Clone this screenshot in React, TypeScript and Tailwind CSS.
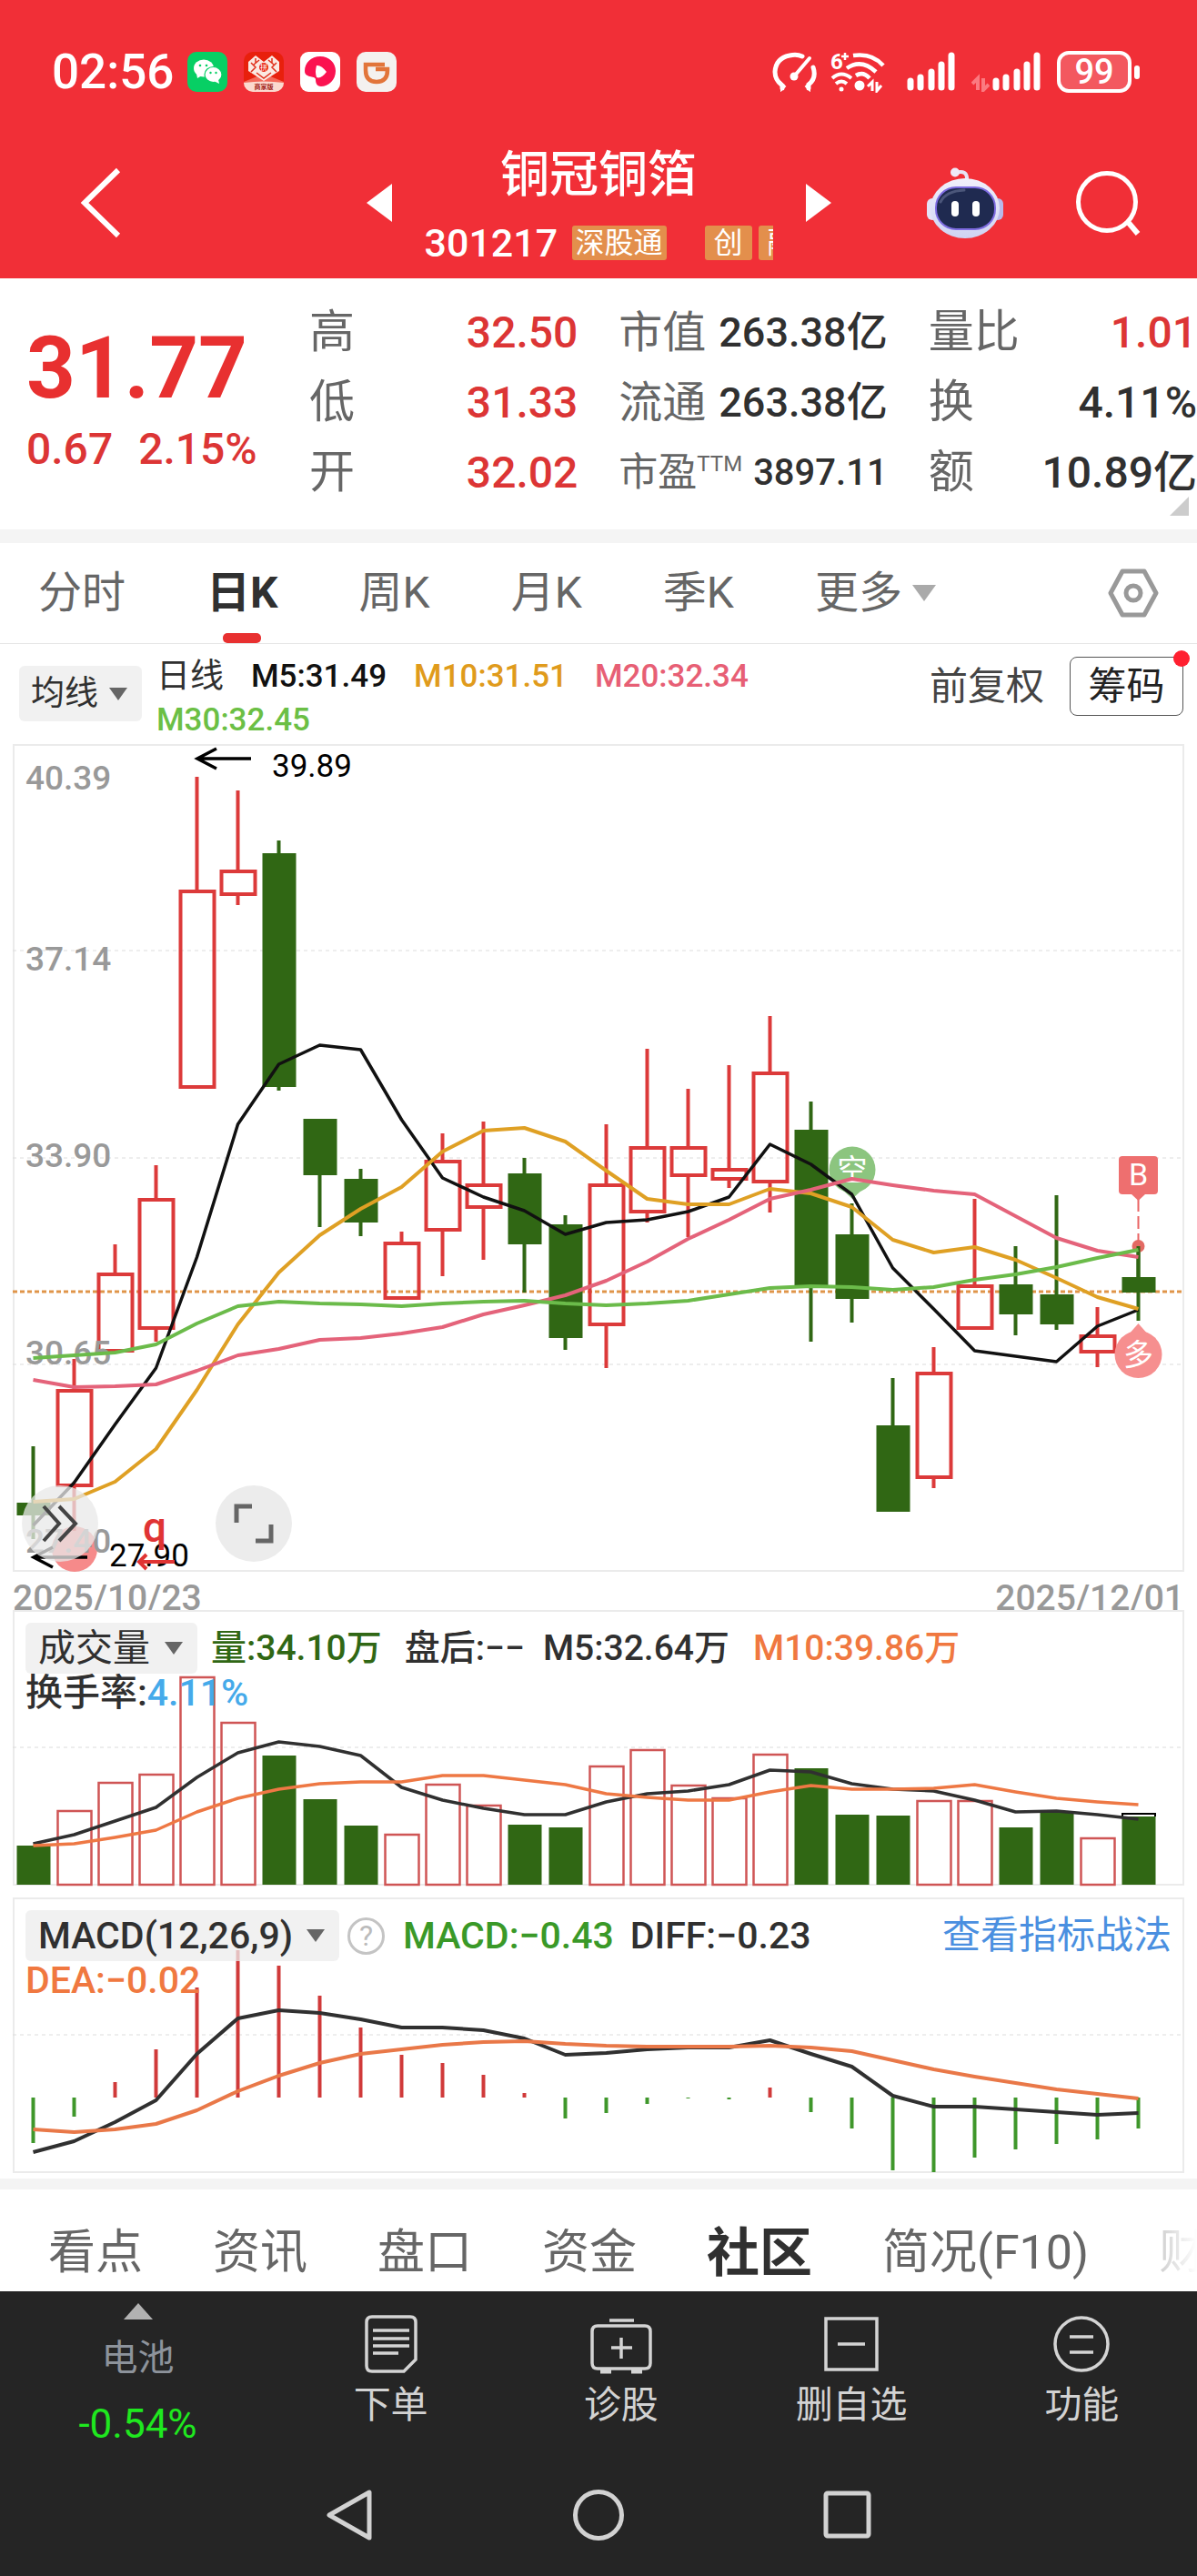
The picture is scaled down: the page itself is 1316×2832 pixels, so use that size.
import React from "react";

const FONT = "font-[Roboto,'Noto_Sans_CJK_SC',sans-serif]";

/* ---------- chart data (units of the drawing's own view box) ---------- */

const X0 = 36.5;
const STEP = 45;
const cx = (i: number) => X0 + i * STEP;

type Candle = [up: boolean, high: number, top: number, bottom: number, low: number];

const candles: Candle[] = [
  [false, 1590, 1652, 1666, 1692],
  [true, 1494, 1527, 1635, 1683],
  [true, 1368, 1399, 1487, 1487],
  [true, 1281, 1317, 1462, 1475],
  [true, 854, 978, 1197, 1197],
  [true, 869, 956, 985, 995],
  [false, 924, 938, 1195, 1199],
  [false, 1230, 1230, 1292, 1349],
  [false, 1285, 1296, 1344, 1359],
  [true, 1354, 1365, 1429, 1429],
  [true, 1246, 1275, 1354, 1403],
  [true, 1233, 1301, 1329, 1385],
  [false, 1273, 1290, 1368, 1421],
  [false, 1336, 1346, 1471, 1484],
  [true, 1236, 1301, 1458, 1504],
  [true, 1153, 1260, 1334, 1344],
  [true, 1197, 1260, 1294, 1360],
  [true, 1171, 1284, 1298, 1306],
  [true, 1117, 1178, 1301, 1333],
  [false, 1211, 1242, 1415, 1475],
  [false, 1323, 1357, 1428, 1454],
  [false, 1515, 1567, 1662, 1662],
  [true, 1481, 1508, 1626, 1636],
  [true, 1318, 1412, 1462, 1462],
  [false, 1370, 1412, 1445, 1468],
  [false, 1314, 1423, 1456, 1462],
  [true, 1437, 1467, 1488, 1503],
  [false, 1370, 1404, 1421, 1452],
];

const ma5 = [1677, 1630, 1566, 1504, 1382, 1236, 1170, 1149, 1154, 1231, 1295, 1316, 1331, 1357, 1344, 1341, 1332, 1316, 1258, 1280, 1313, 1394, 1439, 1485, 1491, 1497, 1458, 1440];
const ma10 = [1651, 1648, 1629, 1593, 1528, 1456, 1399, 1358, 1329, 1305, 1266, 1243, 1240, 1255, 1287, 1318, 1324, 1324, 1307, 1312, 1327, 1363, 1377, 1371, 1385, 1405, 1426, 1439];
const ma20 = [1517, 1525, 1524, 1522, 1507, 1490, 1483, 1473, 1471, 1466, 1459, 1445, 1435, 1424, 1408, 1387, 1362, 1341, 1318, 1308, 1296, 1303, 1309, 1313, 1337, 1361, 1375, 1382];
const ma30 = [1493, 1490, 1487, 1478, 1455, 1436, 1431, 1433, 1434, 1436, 1433, 1431, 1430, 1433, 1435, 1433, 1430, 1423, 1416, 1414, 1415, 1418, 1415, 1407, 1401, 1393, 1383, 1374];

const volume = [2029, 1991, 1960, 1951, 1844, 1894, 1930, 1978, 2007, 2017, 1962, 1985, 2006, 2009, 1942, 1924, 1963, 1977, 1929, 1944, 1995, 1996, 1980, 1980, 2009, 1992, 2021, 1997];
const vol5 = [2027, 2017, 2002, 1987, 1954, 1927, 1915, 1920, 1930, 1965, 1979, 1988, 1995, 1995, 1981, 1972, 1969, 1962, 1946, 1948, 1961, 1967, 1969, 1979, 1992, 1991, 1995, 2000];
const vol10 = [2029, 2027, 2020, 2012, 1992, 1977, 1967, 1961, 1959, 1959, 1952, 1952, 1957, 1962, 1972, 1976, 1979, 1979, 1970, 1963, 1967, 1967, 1966, 1962, 1970, 1977, 1981, 1984];

const macd = [2356, 2327, 2289, 2253, 2185, 2144, 2161, 2194, 2229, 2259, 2268, 2281, 2301, 2329, 2323, 2313, 2307, 2308, 2295, 2322, 2340, 2386, 2388, 2372, 2363, 2357, 2352, 2340];
const diff = [2366, 2354, 2333, 2309, 2258, 2219, 2210, 2213, 2220, 2229, 2229, 2232, 2241, 2259, 2257, 2253, 2251, 2251, 2243, 2258, 2272, 2304, 2316, 2316, 2319, 2322, 2325, 2323];
const dea = [2341, 2344, 2341, 2335, 2320, 2299, 2282, 2268, 2258, 2253, 2248, 2245, 2244, 2247, 2249, 2250, 2250, 2250, 2249, 2251, 2255, 2265, 2275, 2283, 2290, 2297, 2302, 2307];

const points = (ys: number[]) => ys.map((y, i) => `${cx(i)},${y}`).join(" ");

function Line({ ys, color, w = 4 }: { ys: number[]; color: string; w?: number }) {
  return <polyline points={points(ys)} fill="none" stroke={color} strokeWidth={w} strokeLinejoin="round" />;
}

function Grid({ y }: { y: number }) {
  return <line x1="14" x2="1300" y1={y} y2={y} stroke="#dcdcdc" strokeWidth="1" strokeDasharray="4 4" />;
}

function Caret({ className }: { className?: string }) {
  return (
    <svg viewBox="0 0 20 14" className={className} aria-hidden="true">
      <path d="M0 0H20L10 14Z" fill="currentColor" />
    </svg>
  );
}

/* ---------- header ---------- */

function Signal() {
  return (
    <svg viewBox="0 0 54 44" className="h-[44px] w-[54px]" stroke="#fff" strokeWidth="7" strokeLinecap="round">
      <path d="M4 32V39M15 28V39M27 22V39M38 14V39M49 4V39" />
    </svg>
  );
}

function StatusBar() {
  return (
    <div className="flex h-[46px] items-center justify-between pl-[57px] pr-[63px]">
      <div className="flex items-center">
        <span className="w-[149px] text-[53px] font-medium leading-[46px]">02:56</span>
        <div className="flex gap-[18px]">
          <svg viewBox="0 0 44 44" className="size-[44px]">
            <rect width="44" height="44" rx="10" fill="#07cf64" />
            <ellipse cx="18" cy="18" rx="11" ry="9.500" fill="#fff" />
            <path d="M10 24L11 29L16 26Z" fill="#fff" />
            <ellipse cx="28.500" cy="25" rx="9.500" ry="8.500" fill="#fff" stroke="#07cf64" strokeWidth="1.200" />
            <path d="M34 30L35 35L29 32Z" fill="#fff" />
            <circle cx="14" cy="15" r="1.300" fill="#07cf64" />
            <circle cx="21" cy="15" r="1.300" fill="#07cf64" />
            <circle cx="25.500" cy="23" r="1.200" fill="#07cf64" />
            <circle cx="31.500" cy="23" r="1.200" fill="#07cf64" />
          </svg>
          <svg viewBox="0 0 44 44" className="size-[44px]">
            <defs>
              <clipPath id="shopclip"><rect width="44" height="44" rx="10" /></clipPath>
            </defs>
            <g clipPath="url(#shopclip)">
              <rect width="44" height="44" fill="#e8200c" />
              <path d="M22 24L0 33V44H44V33Z" fill="#f4695a" />
              <path d="M22 32L5 21V11L13 4L22 11L31 4L39 11V21Z" fill="#fbe9e2" />
              <path d="M8 12L13 17L8 22M17 9L11 14M36 12L31 17L36 22M27 9L33 14M14 23L22 29L30 23M13 7V12M31 7V12" stroke="#e0301c" strokeWidth="1.500" fill="none" />
              <circle cx="22" cy="17" r="5" fill="#e8200c" />
              <text x="22" y="20" fontSize="8" fill="#fff" textAnchor="middle">拼</text>
              <path d="M0 34Q22 31 44 34V44H0Z" fill="#fbd9cf" />
              <text x="22" y="41" fontSize="7" fontWeight="700" fill="#a02015" textAnchor="middle">商家版</text>
            </g>
          </svg>
          <svg viewBox="0 0 44 44" className="size-[44px]">
            <rect width="44" height="44" rx="9" fill="#fff" />
            <path d="M22 5C32 5 39 12 39 21C39 31 31 38 23 38C18 38 17 34 17 30C16 26 5 29 5 21C5 12 12 5 22 5Z" fill="#fb1250" />
            <path d="M18 15Q23 14 29 22Q23 30 18 28Q16 22 18 15Z" fill="#fff" />
          </svg>
          <svg viewBox="0 0 44 44" className="size-[44px]">
            <rect width="44" height="44" rx="10" fill="#f4f1ef" />
            <path d="M31 14H10V20Q10 33 22 33Q34 33 34 20V19H21" fill="none" stroke="#e2753a" strokeWidth="4.500" />
          </svg>
        </div>
      </div>
      <div className="flex items-center">
        <svg viewBox="0 0 50 44" className="mr-[14px] h-[44px] w-[50px]" fill="none" stroke="#fff" strokeWidth="5" strokeLinecap="round">
          <path d="M11 40L11 37Q3 31 3 22Q4 7 19 4Q27 2 33 5M45 17Q49 29 40 36L40 40" />
          <path d="M10 34V42L14 38ZM41 34V42L37 38Z" strokeWidth="2" fill="#fff" />
          <path d="M41 7L24 27" strokeWidth="4" />
          <circle cx="24" cy="27" r="4.500" fill="#fff" stroke="none" />
        </svg>
        <svg viewBox="0 0 60 46" className="mr-[24px] h-[46px] w-[60px]" fill="none" stroke="#fff" strokeWidth="4.500">
          <text x="0" y="20" fontSize="24" fontWeight="700" fill="#fff" stroke="none">6</text>
          <path d="M12 6H20M16 2V10" strokeWidth="2.500" />
          <path d="M25 5Q46 2 58 16M18 19Q34 8 50 23M28 27Q36 22 43 30" />
          <path d="M2 30Q12 21 23 30M6 36Q12 31 18 36" strokeWidth="4" />
          <circle cx="12" cy="42" r="2.500" fill="#fff" stroke="none" />
          <circle cx="32" cy="38" r="5.500" fill="#fff" stroke="none" />
          <path d="M41 39L46 34V44M51 34V44L56 38" strokeWidth="3" />
        </svg>
        <Signal />
        <svg viewBox="0 0 20 44" className="ml-[17px] mr-[3px] h-[44px] w-[20px]" fill="none" stroke="#fb7a80" strokeWidth="4">
          <path d="M1 35L7 29V42M13 29V42L19 36" />
        </svg>
        <Signal />
        <div className="ml-[17px] flex h-[46px] w-[82px] items-center justify-center rounded-[13px] border-4 border-white bg-white/20 text-[38px] font-medium leading-none">
          99
        </div>
        <div className="ml-[3px] h-[15px] w-[6px] rounded-full bg-white" />
      </div>
    </div>
  );
}

function Robot() {
  return (
    <svg viewBox="0 0 86 78" className="h-[78px] w-[86px]">
      <defs>
        <linearGradient id="shell" x1="0" y1="0" x2="0" y2="1">
          <stop offset="0" stopColor="#f1effb" />
          <stop offset="1" stopColor="#cfd3f2" />
        </linearGradient>
      </defs>
      <path d="M32 6Q46 2 45 14" fill="none" stroke="#e7e2f5" strokeWidth="4" />
      <circle cx="32" cy="5.500" r="5" fill="#efe9f8" />
      <rect x="1" y="34" width="12" height="24" rx="6" fill="#e4e2f6" />
      <rect x="73" y="34" width="12" height="24" rx="6" fill="#b9b9ea" />
      <ellipse cx="43" cy="45" rx="38" ry="33" fill="url(#shell)" />
      <rect x="11" y="22" width="65" height="46" rx="22" fill="#1f2a50" stroke="#7d6be0" strokeWidth="2" />
      <path d="M16 38Q22 26 42 25" fill="none" stroke="#4b567a" strokeWidth="3" strokeLinecap="round" />
      <rect x="28" y="37" width="8" height="17" rx="4" fill="#fff" />
      <rect x="51" y="37" width="8" height="17" rx="4" fill="#fff" />
    </svg>
  );
}

function Header() {
  return (
    <header className="bg-[#f12f37] pt-[56px] text-white">
      <StatusBar />
      <nav className="grid grid-cols-[1fr_auto_1fr] items-center pb-[14px] pt-[52px]">
        <button aria-label="返回" className="w-fit pl-[88px]">
          <svg viewBox="0 0 46 78" className="h-[78px] w-[46px]" fill="none" stroke="#fff" strokeWidth="6">
            <path d="M42 3L5 39L42 75" />
          </svg>
        </button>
        <div className="flex items-center gap-[36px]">
          <button aria-label="上一只">
            <svg viewBox="0 0 28 42" className="h-[42px] w-[28px]"><path d="M28 0V42L0 21Z" fill="#fff" /></svg>
          </button>
          <div className="w-[383px] pt-[5px]">
            <h1 className="text-center text-[54px] font-medium leading-[68px]">铜冠铜箔</h1>
            <div className="mt-[15px] flex h-[50px] items-center overflow-hidden">
              <span className="w-[162px] shrink-0 text-[43px] font-medium leading-[50px]">301217</span>
              <span className="h-[38px] shrink-0 rounded-[3px] bg-[#e38f4c] px-[4px] text-[32px] leading-[38px]">深股通</span>
              <span className="ml-[42px] h-[38px] shrink-0 rounded-[3px] bg-[#e38f4c] px-[10px] text-[32px] leading-[38px]">创</span>
              <span className="ml-[7px] h-[38px] shrink-0 rounded-[3px] bg-[#e38f4c] px-[10px] text-[32px] leading-[38px]">融</span>
            </div>
          </div>
          <button aria-label="下一只">
            <svg viewBox="0 0 28 42" className="h-[42px] w-[28px]"><path d="M0 0V42L28 21Z" fill="#fff" /></svg>
          </button>
        </div>
        <div className="flex items-center justify-end gap-[78px] pr-[62px]">
          <button aria-label="智能助手"><Robot /></button>
          <button aria-label="搜索">
            <svg viewBox="0 0 72 72" className="size-[72px]" fill="none" stroke="#fff" strokeWidth="5">
              <circle cx="35" cy="35" r="31.500" />
              <path d="M58 57L69 70" strokeWidth="6" />
            </svg>
          </button>
        </div>
      </nav>
    </header>
  );
}

/* ---------- quote ---------- */

type Stat = { id: string; label: React.ReactNode; labelSize: string; value: string; valueClass: string };

const stats: Stat[][] = [
  [
    { id: "high", label: "高", labelSize: "text-[50px]", value: "32.50", valueClass: "text-[48px] text-[#dc3535]" },
    { id: "low", label: "低", labelSize: "text-[50px]", value: "31.33", valueClass: "text-[48px] text-[#dc3535]" },
    { id: "open", label: "开", labelSize: "text-[50px]", value: "32.02", valueClass: "text-[48px] text-[#dc3535]" },
  ],
  [
    { id: "cap", label: "市值", labelSize: "text-[48px]", value: "263.38亿", valueClass: "text-[45px] text-[#303030]" },
    { id: "float", label: "流通", labelSize: "text-[48px]", value: "263.38亿", valueClass: "text-[45px] text-[#303030]" },
    {
      id: "pe",
      label: (
        <span className="flex items-start">
          市盈<span className="text-[24px] leading-[58px]">TTM</span>
        </span>
      ),
      labelSize: "text-[43px]",
      value: "3897.11",
      valueClass: "text-[40px] text-[#303030]",
    },
  ],
  [
    { id: "ratio", label: "量比", labelSize: "text-[50px]", value: "1.01", valueClass: "text-[48px] text-[#dc3535]" },
    { id: "turnover", label: "换", labelSize: "text-[50px]", value: "4.11%", valueClass: "text-[48px] text-[#303030]" },
    { id: "amount", label: "额", labelSize: "text-[50px]", value: "10.89亿", valueClass: "text-[48px] text-[#303030]" },
  ],
];

function Quote() {
  return (
    <section className="relative flex pb-[24px] pt-[21px]">
      <div className="w-[340px] shrink-0 pl-[29px] pt-[32px] font-medium text-[#dc3535]">
        <div className="text-[94px] font-bold leading-[92px] text-[#e83030]">31.77</div>
        <div className="mt-[13px] flex gap-[28px] text-[48px] leading-[60px]">
          <span>0.67</span>
          <span>2.15%</span>
        </div>
      </div>
      <div className="grid flex-1 grid-cols-3 gap-[45px]">
        {stats.map((col, c) => (
          <dl key={c}>
            {col.map((s) => (
              <div key={s.id} className="flex h-[77px] items-center justify-between whitespace-nowrap">
                <dt className={`${s.labelSize} leading-[77px] text-[#666]`}>{s.label}</dt>
                <dd className={`${s.valueClass} font-medium leading-[77px]`}>{s.value}</dd>
              </div>
            ))}
          </dl>
        ))}
      </div>
      <svg viewBox="0 0 21 21" className="absolute bottom-[15px] right-[9px] size-[21px]"><path d="M21 0V21H0Z" fill="#ccc" /></svg>
    </section>
  );
}

/* ---------- period tabs ---------- */

function PeriodTabs() {
  return (
    <div className="flex h-[111px] items-center border-b border-[#e6e6e6] pl-[42px] pr-[42px] text-[48px] text-[#666]">
      <div className="flex h-full items-center gap-[89px]">
        <button>分时</button>
        <button className="relative flex h-full items-center font-bold text-[#303030]">
          日K
          <span className="absolute bottom-0 left-1/2 h-[11px] w-[42px] -translate-x-1/2 rounded-[5px] bg-[#e83030]" />
        </button>
        <button>周K</button>
        <button>月K</button>
        <button>季K</button>
        <button className="flex items-center gap-[11px]">
          更多
          <Caret className="h-[20px] w-[26px] text-[#aaa]" />
        </button>
      </div>
      <button aria-label="设置" className="ml-auto">
        <svg viewBox="0 0 56 54" className="h-[54px] w-[56px]" fill="none" stroke="#999" strokeWidth="5" strokeLinejoin="round">
          <path d="M16 3H40L53 27L40 51H16L3 27Z" />
          <circle cx="28" cy="27" r="8" />
        </svg>
      </button>
    </div>
  );
}

function IndicatorSelect({ label, text, className }: { label: string; text: string; className: string }) {
  return (
    <div className="relative w-fit shrink-0">
      <select aria-label={label} className={`${className} block appearance-none rounded-[6px] bg-[#ececec]/75 text-[#303030]`}>
        <option>{text}</option>
      </select>
      <Caret className="pointer-events-none absolute right-[16px] top-1/2 h-[14px] w-[20px] -translate-y-1/2 text-[#666]" />
    </div>
  );
}

function MaLegend() {
  return (
    <div className="flex h-[108px] items-start pl-[21px] pr-[15px]">
      <div className="pt-[24px]">
        <IndicatorSelect label="主图指标" text="均线" className="h-[61px] pl-[13px] pr-[48px] text-[37px]" />
      </div>
      <div className="flex flex-1 flex-wrap gap-x-[30px] pl-[16px] pt-[12px] text-[35px] font-medium leading-[48px]">
        <span className="text-[37px] font-normal text-[#303030]">日线</span>
        <span className="text-[#111]">M5:31.49</span>
        <span className="text-[#e09b1c]">M10:31.51</span>
        <span className="text-[#e75f75]">M20:32.34</span>
        <span className="basis-full text-[#6bbf45]">M30:32.45</span>
      </div>
      <div className="flex items-center gap-[28px] pt-[14px]">
        <button className="text-[42px] leading-[65px] text-[#444]">前复权</button>
        <button className="relative h-[65px] w-[125px] rounded-[8px] border border-[#555] text-[42px] leading-[63px] text-[#222]">
          筹码
          <span className="absolute -right-[8px] -top-[8px] size-[18px] rounded-full bg-[#ff2030]" />
        </button>
      </div>
    </div>
  );
}

/* ---------- charts ---------- */

const axis = [
  ["40.39", 868],
  ["37.14", 1067],
  ["33.90", 1283],
  ["30.65", 1500],
  ["27.40", 1707],
] as const;

function KLine() {
  return (
    <section className="relative">
      <svg viewBox="0 816 1316 913" className="block w-full" role="img" aria-label="日K线图">
        <rect x="15" y="819" width="1286" height="908" fill="#fff" stroke="#ebebeb" strokeWidth="2" />
        <Grid y={1045} />
        <Grid y={1273} />
        <Grid y={1500} />
        <path d="M14 1420H1301" stroke="#e0954a" strokeWidth="3" strokeDasharray="5 3" />

        <g fill="#8cc57f">
          <circle cx="937" cy="1286" r="25.500" />
          <path d="M925 1307L937 1318L949 1307Z" />
        </g>
        <text x="937" y="1298" fontSize="33" fill="#fff" textAnchor="middle">空</text>
        <circle cx="82" cy="1703" r="25" fill="#f68a8a" />

        {candles.map(([up, high, top, bottom, low], i) =>
          up ? (
            <g key={i} stroke="#dc3a3a" strokeWidth="4" fill="none">
              <path d={`M${cx(i)} ${high}V${top}M${cx(i)} ${bottom}V${low}`} />
              <rect x={cx(i) - 18} y={top + 2} width="37" height={bottom - top - 4} />
            </g>
          ) : (
            <g key={i} fill="#306714">
              <rect x={cx(i) - 2} y={high} width="4" height={low - high} />
              <rect x={cx(i) - 18} y={top} width="37" height={bottom - top} />
            </g>
          )
        )}

        <line x1="1251.500" x2="1251.500" y1="1318" y2="1366" stroke="#ea6464" strokeWidth="2" strokeDasharray="14 5" />
        <circle cx="1251.500" cy="1370" r="7" fill="#e36a63" />
        <path d="M1251.500 1370V1404" stroke="#306714" strokeWidth="4" />
        <rect x="1230" y="1271" width="43" height="42" rx="4" fill="#ee6f6f" />
        <path d="M1243 1312H1260L1251.500 1320Z" fill="#ee6f6f" />
        <text x="1251.500" y="1303" fontSize="34" fill="#fff" textAnchor="middle">B</text>

        <g fill="#f68f8f">
          <circle cx="1251.500" cy="1489" r="26" />
          <path d="M1240 1468L1251.500 1455L1263 1468Z" />
        </g>
        <text x="1251.500" y="1501" fontSize="33" fill="#fff" textAnchor="middle">多</text>

        <g fill="#999" fontSize="37" fontWeight="500">
          {axis.map(([t, y]) => (
            <text key={t} x="28" y={y}>{t}</text>
          ))}
        </g>

        <Line ys={ma5} color="#111" w={3.5} />
        <Line ys={ma10} color="#dfa024" />
        <Line ys={ma20} color="#e4637a" />
        <Line ys={ma30} color="#6bbb4a" />

        <g fill="none" stroke="#000" strokeWidth="3.500">
          <path d="M217 834H276M238 823L217 834L238 845" />
          <path d="M37 1712H96M58 1701L37 1712L58 1723" />
        </g>
        <g fill="#000" fontSize="35">
          <text x="299" y="854">39.89</text>
          <text x="120" y="1722">27.90</text>
        </g>
        <text x="157" y="1695" fontSize="46" fontWeight="500" fill="#e03434">q</text>
        <path d="M153 1717H192M161 1709L153 1717L161 1725" fill="none" stroke="#e03434" strokeWidth="4" />
      </svg>
      <button aria-label="展开更多" className="absolute bottom-[12px] left-[24px] flex size-[84px] items-center justify-center rounded-full bg-[#e8e8e8]/75">
        <svg viewBox="0 0 42 42" className="size-[42px]" fill="none" stroke="#444" strokeWidth="4">
          <path d="M3 2L20 21L3 40M20 2L38 21L20 40" />
        </svg>
      </button>
      <button aria-label="全屏" className="absolute bottom-[12px] left-[237px] flex size-[84px] items-center justify-center rounded-full bg-[#ececec]">
        <svg viewBox="0 0 44 44" className="size-[44px]" fill="none" stroke="#666" strokeWidth="5">
          <path d="M20 3H3V21M24 41H41V23" />
        </svg>
      </button>
    </section>
  );
}

function Volume() {
  return (
    <section className="relative">
      <svg viewBox="0 1770 1316 304" className="block w-full" role="img" aria-label="成交量图">
        <rect x="15" y="1771" width="1286" height="301" fill="#fff" stroke="#ebebeb" strokeWidth="2" />
        <Grid y={1921} />
        {volume.map((y, i) =>
          candles[i][0] ? (
            <rect key={i} x={cx(i) - 18} y={y} width="37" height={2072 - y} fill="none" stroke="#cf5555" strokeWidth="2.500" />
          ) : (
            <rect key={i} x={cx(i) - 18} y={y} width="37" height={2072 - y} fill="#306714" />
          )
        )}
        <path d="M1234 1997V1994H1270V1997" fill="none" stroke="#000" strokeWidth="2" />
        <Line ys={vol5} color="#303030" w={3.5} />
        <Line ys={vol10} color="#ee7844" w={3.5} />
      </svg>
      <div className="absolute left-[28px] right-[28px] top-[14px] font-medium">
        <div className="flex items-center text-[39px] leading-[56px]">
          <IndicatorSelect label="副图指标一" text="成交量" className="h-[56px] pl-[14px] pr-[52px] text-[41px] font-normal" />
          <span className="ml-[15px] text-[#306714]">量:34.10万</span>
          <span className="ml-[25px] text-[#303030]">盘后:−−</span>
          <span className="ml-[20px] text-[#303030]">M5:32.64万</span>
          <span className="ml-[26px] text-[#f07840]">M10:39.86万</span>
        </div>
        <div className="text-[41px] leading-[42px] text-[#303030]">
          换手率:<span className="text-[41px] text-[#45aaea]">4.11%</span>
        </div>
      </div>
    </section>
  );
}

function Macd() {
  return (
    <section className="relative mt-[12px]">
      <svg viewBox="0 2086 1316 303" className="block w-full" role="img" aria-label="MACD图">
        <rect x="15" y="2087" width="1286" height="301" fill="#fff" stroke="#ebebeb" strokeWidth="2" />
        <Grid y={2237} />
        {macd.map((y, i) => (
          <line key={i} x1={cx(i)} x2={cx(i)} y1="2306" y2={y} stroke={y < 2306 ? "#d03a3a" : "#3f972b"} strokeWidth="4" />
        ))}
        <Line ys={diff} color="#303030" />
        <Line ys={dea} color="#e97848" />
      </svg>
      <div className="absolute left-[28px] right-[28px] top-[14px] font-medium">
        <div className="flex items-center text-[41px] leading-[56px]">
          <IndicatorSelect label="副图指标二" text="MACD(12,26,9)" className="h-[56px] pl-[14px] pr-[50px] text-[41px] font-medium" />
          <button aria-label="指标说明" className="ml-[9px] size-[41px] shrink-0 rounded-full border-[3px] border-[#c4c4c4] text-[32px] font-normal leading-[34px] text-[#bbb]">
            ?
          </button>
          <span className="ml-[20px] text-[#3a9928]">MACD:−0.43</span>
          <span className="ml-[18px] text-[#303030]">DIFF:−0.23</span>
          <a href="#guide" className="ml-auto text-[42px] font-normal text-[#4a8fe0]">查看指标战法</a>
        </div>
        <div className="text-[41px] leading-[42px] text-[#f07840]">DEA:−0.02</div>
      </div>
    </section>
  );
}

/* ---------- bottom ---------- */

function InfoTabs() {
  return (
    <div className="relative flex h-[112px] items-center gap-[77px] overflow-hidden whitespace-nowrap pl-[53px] pt-[28px] text-[52px] leading-[76px] text-[#666]">
      <button>看点</button>
      <button>资讯</button>
      <button>盘口</button>
      <button>资金</button>
      <button className="text-[58px] font-bold text-[#303030]">社区</button>
      <button>简况(F10)</button>
      <button>财务</button>
      <div className="pointer-events-none absolute inset-y-0 right-0 w-[80px] bg-gradient-to-r from-white/40 to-white" />
    </div>
  );
}

function ToolButton({ label, children }: { label: string; children: React.ReactNode }) {
  return (
    <button className="flex flex-1 flex-col items-center pt-[25px]">
      <svg viewBox="0 0 70 66" className="h-[66px] w-[70px]" fill="none" stroke="#d4d4d4" strokeWidth="3.500">
        {children}
      </svg>
      <span className="mt-[6px] text-[41px] leading-[56px] text-[#d2d2d2]">{label}</span>
    </button>
  );
}

function Toolbar() {
  return (
    <footer className="bg-[#252525]">
      <div className="flex h-[218px]">
        <button className="flex w-[303px] shrink-0 flex-col items-center pt-[13px]">
          <svg viewBox="0 0 32 18" className="h-[18px] w-[32px]"><path d="M16 0L32 18H0Z" fill="#b2b2b2" /></svg>
          <span className="mt-[13px] text-[40px] leading-[60px] text-[#8d939b]">电池</span>
          <span className="mt-[12px] text-[44px] leading-[60px] text-[#1fe81f]">-0.54%</span>
        </button>
        <ToolButton label="下单">
          <path d="M14 3H56Q62 3 62 9V50L49 63H14Q8 63 8 57V9Q8 3 14 3Z" />
          <path d="M15 18H55M15 27H55M15 35H55M15 43H43" />
        </ToolButton>
        <ToolButton label="诊股">
          <path d="M22 7H49M9 13H61Q67 13 67 19V54Q67 60 61 60H9Q3 60 3 54V19Q3 13 9 13Z" />
          <path d="M35 26V49M24 37H47" />
          <path d="M12 63H24M46 63H58" strokeWidth="5" />
        </ToolButton>
        <ToolButton label="删自选">
          <rect x="7" y="5" width="56" height="56" />
          <path d="M20 33H50" />
        </ToolButton>
        <ToolButton label="功能">
          <circle cx="35" cy="33" r="29" />
          <path d="M22 25H48M22 42H48" />
        </ToolButton>
      </div>
      <div className="flex items-center justify-center gap-[218px] pb-[39px]">
        <button aria-label="系统返回">
          <svg viewBox="0 0 56 56" className="size-[56px]" fill="none" stroke="#d2d2d2" strokeWidth="5" strokeLinejoin="round">
            <path d="M50 3V53L6 28Z" />
          </svg>
        </button>
        <button aria-label="主屏幕">
          <svg viewBox="0 0 56 56" className="size-[56px]" fill="none" stroke="#d2d2d2" strokeWidth="5">
            <circle cx="28" cy="28" r="25.500" />
          </svg>
        </button>
        <button aria-label="最近任务">
          <svg viewBox="0 0 56 56" className="size-[56px]" fill="none" stroke="#d2d2d2" strokeWidth="5">
            <rect x="4" y="4" width="47" height="47" rx="2" />
          </svg>
        </button>
      </div>
    </footer>
  );
}

export default function App() {
  return (
    <main className={`${FONT} w-full overflow-hidden bg-white`}>
      <Header />
      <Quote />
      <div className="h-[15px] bg-[#f4f4f4]" />
      <PeriodTabs />
      <MaLegend />
      <KLine />
      <div className="flex h-[41px] justify-between overflow-hidden px-[14px] pt-[8px] text-[39px] font-medium leading-[40px] text-[#999]">
        <time>2025/10/23</time>
        <time>2025/12/01</time>
      </div>
      <Volume />
      <Macd />
      <div className="mt-[6px] h-[12px] bg-[#f4f4f4]" />
      <InfoTabs />
      <Toolbar />
    </main>
  );
}
